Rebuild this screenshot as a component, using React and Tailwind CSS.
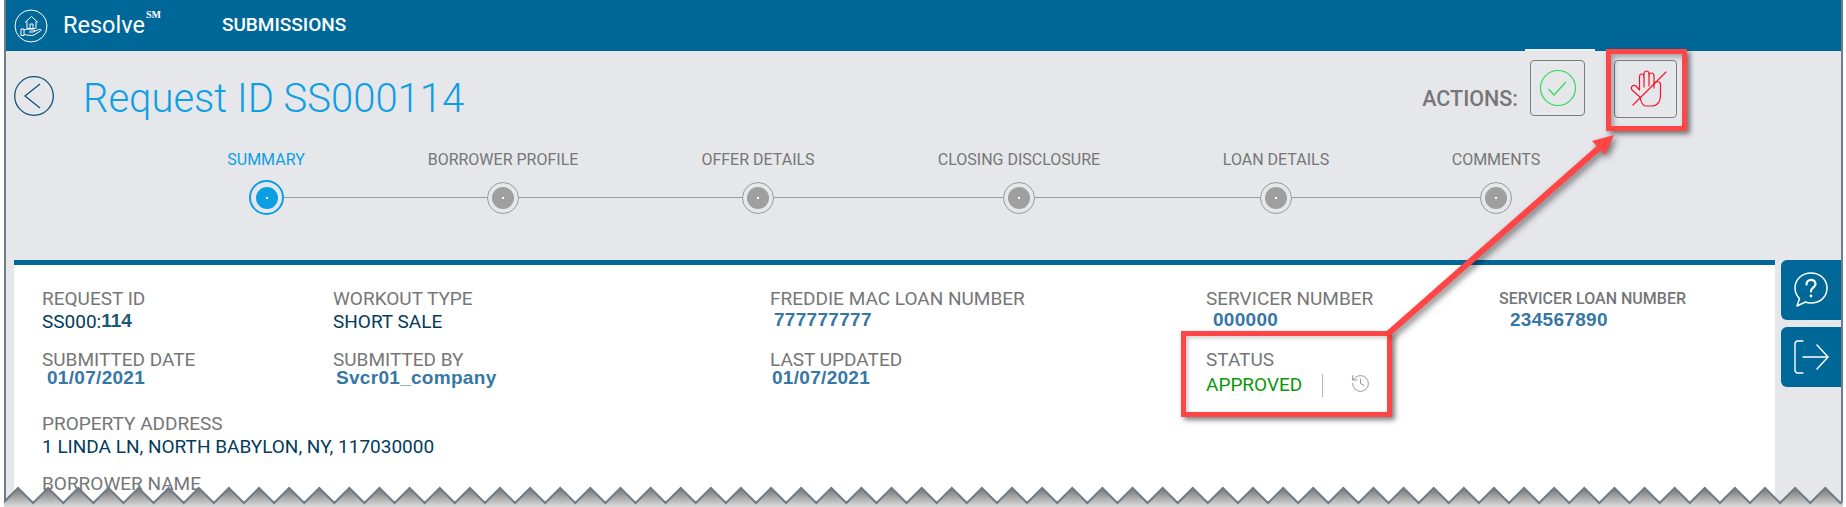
import { History } from "lucide-react";

const steps = [
  { label: "SUMMARY", labelW: "w-[120px]", active: true, lineW: "w-[203px]" },
  { label: "BORROWER PROFILE", labelW: "w-[354px]", lineW: "w-[223px]" },
  { label: "OFFER DETAILS", labelW: "w-[156px]", lineW: "w-[229px]" },
  { label: "CLOSING DISCLOSURE", labelW: "w-[366px]", lineW: "w-[225px]" },
  { label: "LOAN DETAILS", labelW: "w-[148px]", lineW: "w-[188px]" },
  { label: "COMMENTS", labelW: "w-[292px]" },
];

// torn page edge along the bottom
const tornEdge = () => {
  const points = [];
  for (let i = 0; i < 62; i++) {
    const x = 3 + i * 30.12;
    points.push(`${x},503`, `${x + 15.06},488`);
  }
  return points;
};

const Label = ({ children, className = "text-[19px]" }) => (
  <div className={`h-5 leading-5 text-[#767676] whitespace-nowrap ${className}`}>{children}</div>
);

const DarkValue = ({ children }) => (
  <div className="mt-[1px] leading-6 text-[19px] text-[#033b5c]">{children}</div>
);

const BlueValue = ({ children, className = "leading-[22px]" }) => (
  <div className={`font-['Liberation_Sans',sans-serif] font-bold text-[19px] text-[#3677a5] tracking-[0.3px] ${className}`}>
    {children}
  </div>
);

const StepDot = ({ active }) => (
  <div
    className={
      active
        ? "w-[35px] h-[35px] shrink-0 rounded-full border-2 border-[#0a9fe3] flex items-center justify-center"
        : "w-[32px] h-[32px] shrink-0 rounded-full border border-[#9a9a9a] flex items-center justify-center"
    }
  >
    <div className={`w-[22px] h-[22px] rounded-full flex items-center justify-center ${active ? "bg-[#0a9fe3]" : "bg-[#9f9f9f]"}`}>
      <div className="w-[2px] h-[2px] bg-white" />
    </div>
  </div>
);

const LogoIcon = () => (
  <svg width="34" height="34" viewBox="0 0 34 34" fill="none" stroke="white" strokeWidth="1">
    <circle cx="17" cy="17" r="16" />
    <path d="M11 13.5 L17.5 7.5 L24 13.5" />
    <path d="M13 12.5 V19.5 H22 V12.5" />
    <path d="M16 19.5 V15 H19 V19.5" />
    <path d="M7 20 H10 V26.5 H7 Z" />
    <path d="M10 21 C13 19.5 15 20 17 21 H20 C21 21 21 23 19 23 H15" />
    <path d="M20 22.5 L25 20.5 C27 20 28 21 26.5 22 L20 26 C17 27 13 26 10 25.5" />
  </svg>
);

const CheckIcon = () => (
  <svg width="38" height="38" viewBox="0 0 38 38" fill="none" stroke="#2bdc5c" strokeWidth="1.2">
    <circle cx="19" cy="19" r="17.5" />
    <path d="M9.5 20 L15 26 L27 13" />
  </svg>
);

const HandOffIcon = () => (
  <svg width="42" height="40" viewBox="-3 0 42 40" fill="none" stroke="#f5142c" strokeWidth="1.2" strokeLinecap="round" strokeLinejoin="round">
    <path d="M12 28 L4 21 C2 18 5 15 8 17 L11.5 21 V8 C11.5 4 16 4 16 8 V5 C16 1 21 1 21 5 V7 C21 3 26 3 26 7 V15 C26 12 32.5 12 32.5 15 V27 C32.5 33 29 37 24 37 H18 C15 37 13 34 12 28" />
    <path d="M16 8 V18 M21 7 V17 M26 15 V19" />
    <path d="M5 36 L38 3" />
  </svg>
);

const HelpIcon = () => (
  <svg width="38" height="40" viewBox="0 0 38 40" fill="none" stroke="white" strokeWidth="1.5" strokeLinejoin="round">
    <path d="M19 3 C28 3 35 9.5 35 18 C35 27 28 33 19 33 C17 33 15 32.7 13.5 32 L5 36 L7.5 28.5 C4.5 25.5 3 22 3 18 C3 9.5 10 3 19 3 Z" />
    <path d="M14.5 14.5 C14.5 8.5 23.5 8.5 23.5 14 C23.5 17.5 19 17.5 19 21.5" strokeWidth="2.2" strokeLinecap="round" />
    <circle cx="19" cy="26" r="1.4" fill="white" stroke="none" />
  </svg>
);

const ExitIcon = () => (
  <svg width="38" height="36" viewBox="0 0 38 36" fill="none" stroke="white" strokeWidth="1.4" strokeLinecap="round" strokeLinejoin="round">
    <path d="M11 2 H6 C4 2 3 3 3 5 V31 C3 33 4 34 6 34 H11" />
    <path d="M11 18 H36" />
    <path d="M25 6 L36 18 L25 30" />
  </svg>
);

const App = () => {
  const edge = tornEdge();

  return (
    <div className="relative w-[1846px] h-[507px] overflow-hidden bg-white font-['Roboto',sans-serif]">
      <div className="ml-[4px] w-[1839px] h-full border-x-2 border-[#6f7c87] bg-[#e6e7eb] flex flex-col overflow-hidden">
        {/* Top bar */}
        <header className="h-[51px] shrink-0 bg-[#006898] flex items-center text-white pl-[8px]">
          <LogoIcon />
          <div className="ml-[15px] text-[23.5px] leading-none relative pr-[16px]">
            Resolve
            <span className="absolute right-0 top-[-4px] text-[10px] font-['Liberation_Serif',serif] font-bold">SM</span>
          </div>
          <div className="ml-[61px] text-[19px] font-medium">SUBMISSIONS</div>
        </header>

        {/* Title and actions */}
        <div className="h-[90px] shrink-0 flex justify-between items-center pl-[8px] pr-[164px]">
          <div className="flex items-center gap-[29px]">
            <svg width="40" height="40" viewBox="0 0 40 40" fill="none" stroke="#10537a" strokeWidth="1.3">
              <circle cx="20" cy="20" r="19.3" />
              <path d="M26 8 L11 20 L26 32" />
            </svg>
            <h1 className="mt-[6px] text-[40px] font-light text-[#0f9fe3] leading-[48px]">Request ID SS000114</h1>
          </div>
          <div className="flex items-start self-start mt-[9px]">
            <span className="mt-[27px] text-[21.5px] font-medium text-[#767676] leading-6">ACTIONS:</span>
            <button className="ml-[12px] w-[55px] h-[56px] rounded border border-[#7d7d7d] flex items-center justify-center">
              <CheckIcon />
            </button>
            <button className="ml-[29px] w-[63px] h-[58px] rounded border border-[#7d7d7d] flex items-center justify-center">
              <HandOffIcon />
            </button>
          </div>
        </div>

        {/* Steps */}
        <div className="mt-[9px] ml-[200px] flex shrink-0">
          {steps.map((s) => (
            <div
              key={s.label}
              className={`${s.labelW} text-center h-5 leading-5 text-[16px] ${s.active ? "text-[#0a9fe3]" : "text-[#767676]"}`}
            >
              {s.label}
            </div>
          ))}
        </div>
        <div className="mt-[10px] ml-[243px] h-[35px] flex items-center shrink-0">
          {steps.map((s) => (
            <div key={s.label} className="flex items-center">
              <StepDot active={s.active} />
              {s.lineW && <div className={`${s.lineW} h-px bg-[#9a9a9a]`} />}
            </div>
          ))}
        </div>

        {/* Card and side tabs */}
        <div className="mt-[45px] flex flex-1 min-h-0">
          <div className="ml-[8px] w-[1761px] bg-white border-t-[5px] border-[#006898] pl-[28px] pt-[24px]">
            <div className="grid grid-cols-[291px_437px_436px_293px_1fr] auto-rows-[61px]">
              <div>
                <Label>REQUEST ID</Label>
                <div className="mt-[1px] leading-6 text-[19px] text-[#033b5c] flex items-baseline">
                  SS000:
                  <span className="font-['Liberation_Sans',sans-serif] font-bold text-[19px] text-[#1d5876] -translate-y-px">114</span>
                </div>
              </div>
              <div>
                <Label>WORKOUT TYPE</Label>
                <DarkValue>SHORT SALE</DarkValue>
              </div>
              <div>
                <Label>FREDDIE MAC LOAN NUMBER</Label>
                <BlueValue className="pl-[4px] leading-[22px]">777777777</BlueValue>
              </div>
              <div>
                <Label>SERVICER NUMBER</Label>
                <BlueValue className="pl-[7px] leading-[22px]">000000</BlueValue>
              </div>
              <div>
                <Label className="text-[16px] font-medium">SERVICER LOAN NUMBER</Label>
                <BlueValue className="pl-[11px] leading-[22px]">234567890</BlueValue>
              </div>

              <div>
                <Label>SUBMITTED DATE</Label>
                <BlueValue className="pl-[5px] leading-4">01/07/2021</BlueValue>
              </div>
              <div>
                <Label>SUBMITTED BY</Label>
                <BlueValue className="pl-[3px] leading-4">Svcr01_company</BlueValue>
              </div>
              <div>
                <Label>LAST UPDATED</Label>
                <BlueValue className="pl-[2px] leading-4">01/07/2021</BlueValue>
              </div>
              <div>
                <Label>STATUS</Label>
                <div className="mt-[3px] flex items-center">
                  <span className="text-[19px] leading-6 text-[#0a980a]">APPROVED</span>
                  <span className="ml-[20px] w-px h-[23px] bg-[#b5b5b5]" />
                  <History className="ml-[27px] w-[21px] h-[21px] text-[#8a8a8a] -mt-[4px]" strokeWidth={1} />
                </div>
              </div>
              <div />

              <div className="col-span-5 mt-[3px]">
                <Label>PROPERTY ADDRESS</Label>
                <DarkValue>1 LINDA LN, NORTH BABYLON, NY, 117030000</DarkValue>
              </div>
              <div className="col-span-5 mt-[2px]">
                <Label>BORROWER NAME</Label>
              </div>
            </div>
          </div>

          <div className="ml-[6px] w-[60px] flex flex-col gap-[7px]">
            <div className="h-[60px] rounded-l-md bg-[#006898] flex items-center justify-center">
              <HelpIcon />
            </div>
            <div className="h-[60px] rounded-l-md bg-[#006898] flex items-center justify-center">
              <ExitIcon />
            </div>
          </div>
        </div>
      </div>

      {/* Light sliver above the check button */}
      <div className="absolute left-[1525px] top-[49px] w-[70px] h-[2px] bg-[#eef0f2]" />

      {/* Red callouts */}
      <div className="absolute left-[1606px] top-[49px] w-[81px] h-[82px] border-[5px] border-[#ff4545] shadow-[3px_3px_5px_rgba(0,0,0,0.5),inset_3px_3px_5px_rgba(0,0,0,0.3)]" />
      <div className="absolute left-[1181px] top-[331px] w-[211px] h-[86px] border-[5px] border-[#ff4545] shadow-[3px_3px_5px_rgba(0,0,0,0.5),inset_2px_2px_4px_rgba(0,0,0,0.2)]" />
      <svg className="absolute left-0 top-0 drop-shadow-[3px_3px_3px_rgba(0,0,0,0.5)]" width="1846" height="507" fill="none">
        <path d="M1389 333 L1600 147" stroke="#ff4545" strokeWidth="6" />
        <polygon points="1614,135 1592,141 1605,155" fill="#ff4545" />
      </svg>

      {/* Torn bottom edge */}
      <svg className="absolute left-0 top-0" width="1846" height="507" fill="none">
        <defs>
          <linearGradient id="tornShade" x1="0" y1="490" x2="0" y2="507" gradientUnits="userSpaceOnUse">
            <stop offset="0" stopColor="#7f7f7f" />
            <stop offset="1" stopColor="#dcdcdc" />
          </linearGradient>
        </defs>
        <clipPath id="tornClip">
          <rect x="4" y="0" width="1839" height="507" />
        </clipPath>
        <g clipPath="url(#tornClip)">
          <polygon points={`${edge.join(" ")} 1900,507 3,507`} fill="url(#tornShade)" />
          <polyline points={edge.join(" ")} stroke="#6f7c87" strokeWidth="2" />
        </g>
      </svg>
    </div>
  );
};

export default App;
